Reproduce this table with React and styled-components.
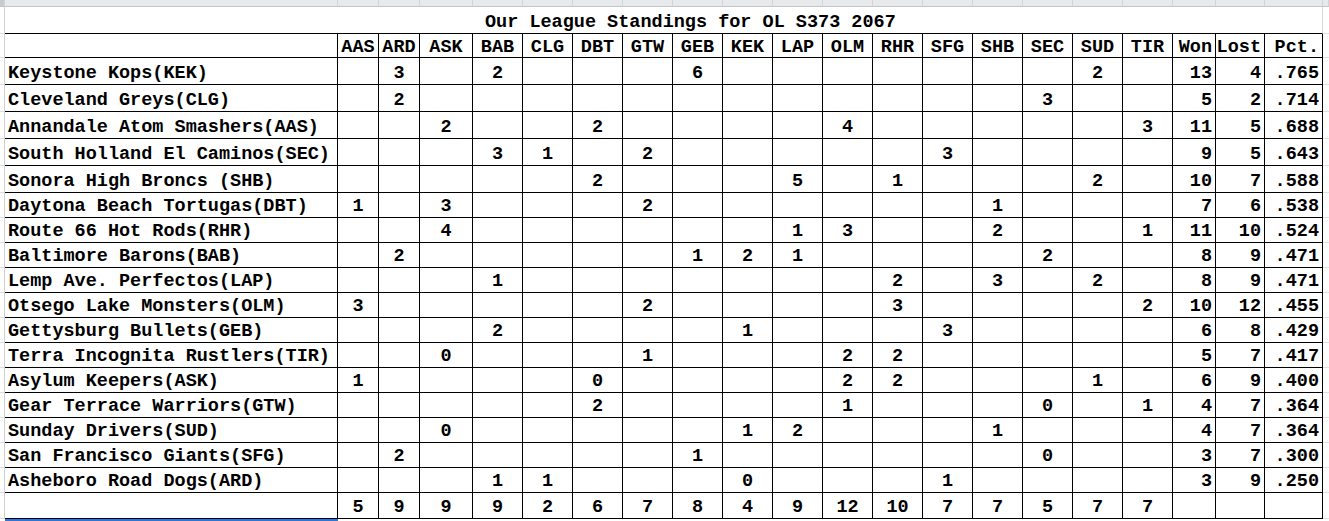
import React from 'react'
import styled, { createGlobalStyle } from 'styled-components'

const GlobalStyle = createGlobalStyle`
  html, body {
    margin: 0;
    padding: 0;
    background: #fff;
  }
`

const TEAMS = ['AAS', 'ARD', 'ASK', 'BAB', 'CLG', 'DBT', 'GTW', 'GEB', 'KEK', 'LAP', 'OLM', 'RHR', 'SFG', 'SHB', 'SEC', 'SUD', 'TIR']

const STANDINGS = [
    { name: 'Keystone Kops(KEK)', games: { ARD: 3, BAB: 2, GEB: 6, SUD: 2 }, won: 13, lost: 4, pct: '.765' },
    { name: 'Cleveland Greys(CLG)', games: { ARD: 2, SEC: 3 }, won: 5, lost: 2, pct: '.714' },
    { name: 'Annandale Atom Smashers(AAS)', games: { ASK: 2, DBT: 2, OLM: 4, TIR: 3 }, won: 11, lost: 5, pct: '.688' },
    { name: 'South Holland El Caminos(SEC)', games: { BAB: 3, CLG: 1, GTW: 2, SFG: 3 }, won: 9, lost: 5, pct: '.643' },
    { name: 'Sonora High Broncs (SHB)', games: { DBT: 2, LAP: 5, RHR: 1, SUD: 2 }, won: 10, lost: 7, pct: '.588' },
    { name: 'Daytona Beach Tortugas(DBT)', games: { AAS: 1, ASK: 3, GTW: 2, SHB: 1 }, won: 7, lost: 6, pct: '.538' },
    { name: 'Route 66 Hot Rods(RHR)', games: { ASK: 4, LAP: 1, OLM: 3, SHB: 2, TIR: 1 }, won: 11, lost: 10, pct: '.524' },
    { name: 'Baltimore Barons(BAB)', games: { ARD: 2, GEB: 1, KEK: 2, LAP: 1, SEC: 2 }, won: 8, lost: 9, pct: '.471' },
    { name: 'Lemp Ave. Perfectos(LAP)', games: { BAB: 1, RHR: 2, SHB: 3, SUD: 2 }, won: 8, lost: 9, pct: '.471' },
    { name: 'Otsego Lake Monsters(OLM)', games: { AAS: 3, GTW: 2, RHR: 3, TIR: 2 }, won: 10, lost: 12, pct: '.455' },
    { name: 'Gettysburg Bullets(GEB)', games: { BAB: 2, KEK: 1, SFG: 3 }, won: 6, lost: 8, pct: '.429' },
    { name: 'Terra Incognita Rustlers(TIR)', games: { ASK: 0, GTW: 1, OLM: 2, RHR: 2 }, won: 5, lost: 7, pct: '.417' },
    { name: 'Asylum Keepers(ASK)', games: { AAS: 1, DBT: 0, OLM: 2, RHR: 2, SUD: 1 }, won: 6, lost: 9, pct: '.400' },
    { name: 'Gear Terrace Warriors(GTW)', games: { DBT: 2, OLM: 1, SEC: 0, TIR: 1 }, won: 4, lost: 7, pct: '.364' },
    { name: 'Sunday Drivers(SUD)', games: { ASK: 0, KEK: 1, LAP: 2, SHB: 1 }, won: 4, lost: 7, pct: '.364' },
    { name: 'San Francisco Giants(SFG)', games: { ARD: 2, GEB: 1, SEC: 0 }, won: 3, lost: 7, pct: '.300' },
    { name: 'Asheboro Road Dogs(ARD)', games: { BAB: 1, CLG: 1, KEK: 0, SFG: 1 }, won: 3, lost: 9, pct: '.250' },
]

const TOTALS = [5, 9, 9, 9, 2, 6, 7, 8, 4, 9, 12, 10, 7, 7, 5, 7, 7]

// gutter | team name | 17 opponents | won | lost | pct | spill-over column
const TEMPLATE = '5px 333px 41px 41px 53px repeat(14, 50px) 43px 49px 58px 1fr'

const Sheet = styled.div`
    width: 1329px;
    display: flex;
    flex-direction: column;
    font-family: "Liberation Mono", "Courier New", monospace;
    font-weight: bold;
    font-size: 18.5px;
    color: #000;
`

const Row = styled.div`
    display: grid;
    grid-template-columns: ${TEMPLATE};
    height: ${p => p.$h}px;
`

const BandCell = styled.div`
    box-sizing: border-box;
    background: ${p => p.$dark ? '#c9cacc' : '#e8e9eb'};
    border-right: 1px solid #d3d4d6;
    border-bottom: 1px solid #c3c4c6;
`

const Gutter = styled.div`
    box-sizing: border-box;
    border-right: 1px solid #d0d0d0;
    border-bottom: 1px solid #dedede;
`

const Spill = styled.div`
    box-sizing: border-box;
    border-bottom: 1px solid #e0e0e0;
`

const Cell = styled.div`
    box-sizing: border-box;
    display: flex;
    align-items: flex-end;
    justify-content: ${p => p.$align === 'left' ? 'flex-start' : p.$align === 'right' ? 'flex-end' : 'center'};
    padding: 0 3px;
    border-right: 1px solid #000;
    border-bottom: 1px solid #000;
    white-space: pre;
    overflow: hidden;
    line-height: ${p => p.$tight ? '19px' : 'normal'};
`

const TitleCell = styled(Cell)`
    grid-column: span 21;
    justify-content: flex-start;
    padding-left: 480px;
    border-right: 1px solid #d8d8d8;
`

const Selection = styled.div`
    background: #2a76dc;
`

function RecordRow({ team, h }) {
    return (
        <Row $h={h}>
            <Gutter />
            <Cell $align="left">{team.name}</Cell>
            {TEAMS.map(t => (
                <Cell key={t}>{team.games[t] !== undefined ? team.games[t] : ''}</Cell>
            ))}
            <Cell $align="right">{team.won}</Cell>
            <Cell $align="right">{team.lost}</Cell>
            <Cell $align="right">{team.pct}</Cell>
            <Spill />
        </Row>
    )
}

export default function App() {
    return (
        <>
            <GlobalStyle />
            <Sheet>
                <Row $h={7}>
                    <BandCell $dark />
                    <BandCell />
                    {TEAMS.map(t => <BandCell key={t} />)}
                    <BandCell />
                    <BandCell />
                    <BandCell />
                    <BandCell />
                </Row>

                <Row $h={27}>
                    <Gutter />
                    <TitleCell>Our League Standings for OL S373 2067</TitleCell>
                    <Spill />
                </Row>

                <Row $h={24}>
                    <Gutter />
                    <Cell />
                    {TEAMS.map(t => <Cell key={t} $tight>{t}</Cell>)}
                    <Cell $align="right" $tight>Won</Cell>
                    <Cell $align="right" $tight>Lost</Cell>
                    <Cell $align="right" $tight>Pct.</Cell>
                    <Spill />
                </Row>

                {STANDINGS.map((team, i) => (
                    <RecordRow key={team.name} team={team} h={i < 5 ? 27 : 25} />
                ))}

                <Row $h={26}>
                    <Gutter />
                    <Cell />
                    {TOTALS.map((n, i) => <Cell key={TEAMS[i]}>{n}</Cell>)}
                    <Cell />
                    <Cell />
                    <Cell />
                    <Spill />
                </Row>

                <Row $h={2}>
                    <div />
                    <Selection />
                </Row>
            </Sheet>
        </>
    )
}
